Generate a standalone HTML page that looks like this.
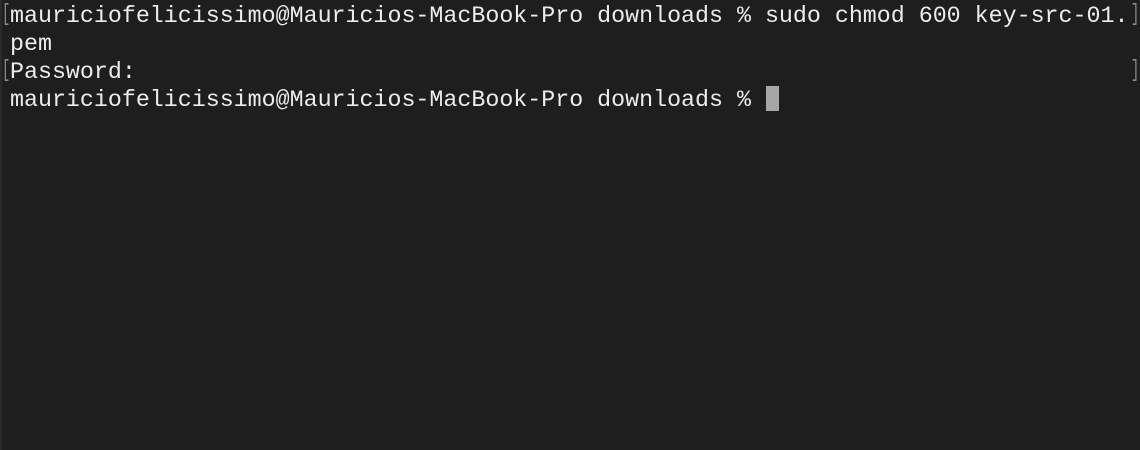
<html><head><style>
body{margin:0;width:1140px;height:450px;background:#1e1e1e;overflow:hidden;position:relative;font-family:"Liberation Mono",monospace;}
.l{position:absolute;left:10px;font-size:23.3px;color:#ececec;white-space:pre;line-height:28px;}
.b{position:absolute;font-size:23.55px;color:#8a8a8a;line-height:28px;font-family:"Liberation Mono",monospace;transform:scaleX(0.6);}
.edge{position:absolute;left:0;top:0;width:2px;height:450px;background:#2a2a2a;}
.cur{position:absolute;left:766px;top:86px;width:13px;height:25px;background:#a6a6a6;}
</style></head><body>
<div class="edge"></div>
<div class="l" style="top:2px">mauriciofelicissimo@Mauricios-MacBook-Pro downloads % sudo chmod 600 key-src-01.</div>
<div class="l" style="top:30px">pem</div>
<div class="l" style="top:58px">Password:</div>
<div class="l" style="top:86px">mauriciofelicissimo@Mauricios-MacBook-Pro downloads % </div>
<div class="b" style="left:-1px;top:1px">[</div>
<div class="b" style="left:1128px;top:1px">]</div>
<div class="b" style="left:-1px;top:57px">[</div>
<div class="b" style="left:1128px;top:57px">]</div>
<div class="cur"></div>
</body></html>
